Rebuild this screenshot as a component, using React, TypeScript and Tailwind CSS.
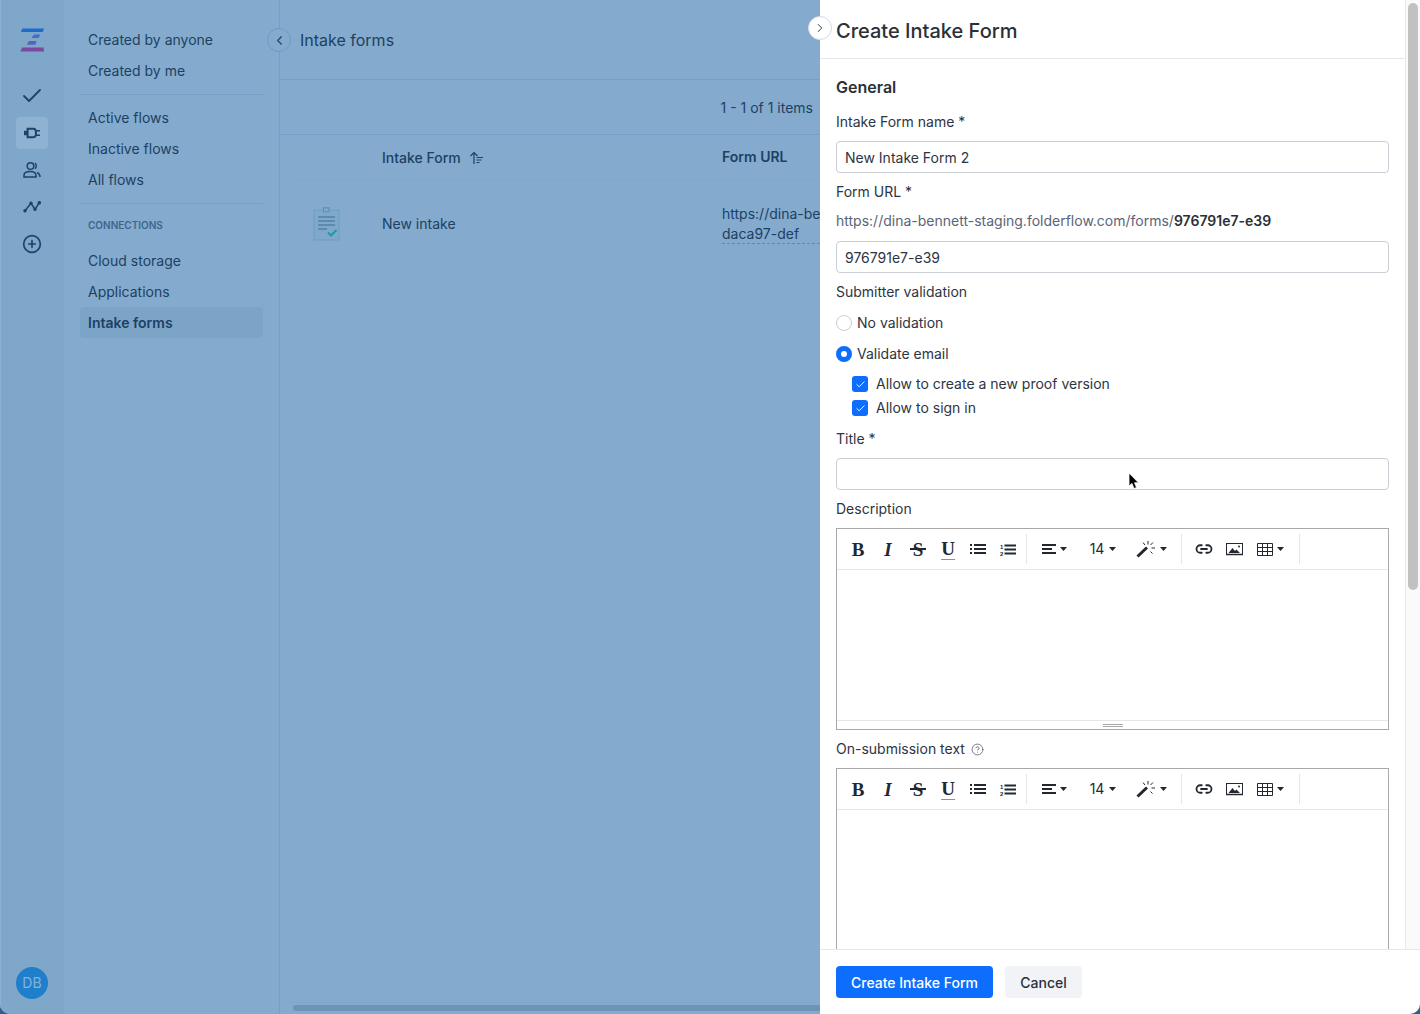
import { Check, ChevronLeft, ChevronRight, CircleHelp, CirclePlus, Link2 } from "lucide-react";

// Everything behind the drawer is painted in its dimmed colours, there is no scrim layer.
const TOP_VIEWS = ["Created by anyone", "Created by me"];
const FLOW_VIEWS = ["Active flows", "Inactive flows", "All flows"];
const CONNECTIONS = ["Cloud storage", "Applications"];

function Logo() {
  return (
    <svg width="24" height="24" viewBox="0 0 24 24">
      <path d="M2.4 0.5H24L22.8 4H0.8Z" fill="#1f6bd0" />
      <path d="M14 6.5H20.5L18.5 10H11.5Z" fill="#3f6fcf" />
      <path d="M9 13H16.5L15.5 16.8H6.8Z" fill="#5a62bf" />
      <path d="M2 19.5H23.5L24 23.5H0.5Z" fill="#7a4a9e" />
    </svg>
  );
}

function PlugIcon() {
  return (
    <svg width="18" height="18" viewBox="0 0 18 18" fill="none" stroke="#1c4368" strokeWidth="2">
      <path d="M4.6 4.8H10.5C12 4.8 13 6 13 9C13 12 12 13.2 10.5 13.2H4.6Z" />
      <path d="M1 6.8H4.5V11.2H1Z" fill="#1c4368" stroke="none" />
      <path d="M13 6.8H17M13 11.2H17" strokeWidth="1.6" />
    </svg>
  );
}

function PeopleIcon() {
  return (
    <svg width="18" height="18" viewBox="0 0 18 18" fill="none" stroke="#1c4368" strokeWidth="1.5">
      <circle cx="7.5" cy="5" r="3.3" />
      <path d="M1 16V14.5C1 12 3 10.6 7 10.6C11 10.6 13 12 13 14.5V16Z" />
      <path d="M12 2C13.6 3.2 13.6 6.4 12 7.8M17 16C17 14 16 12.4 14.2 11.4" />
    </svg>
  );
}

function TrendIcon() {
  return (
    <svg width="18" height="18" viewBox="0 0 18 18" fill="none" stroke="#1c4368" strokeWidth="1.5">
      <path d="M2 12.7L8 5.3L12 11.3L16.3 4.7" />
      <circle cx="2" cy="12.7" r="1" fill="#1c4368" />
      <circle cx="8" cy="5.3" r="1" fill="#1c4368" />
      <circle cx="12" cy="11.3" r="1" fill="#1c4368" />
      <circle cx="16.3" cy="4.7" r="1" fill="#1c4368" />
    </svg>
  );
}

function Rail() {
  return (
    <div className="flex w-16 shrink-0 flex-col items-center border-l border-[#8db1d1] bg-[#7fa7ca] pt-[28px] pr-px pb-[15px]">
      <Logo />
      <div className="mt-[28px] flex h-[32px] w-8 items-center justify-center">
        <Check size={24} strokeWidth={1.8} className="text-[#1c4368]" />
      </div>
      <div className="mt-[5px] flex h-8 w-8 items-center justify-center rounded-[4px] bg-[#8db2d2]">
        <PlugIcon />
      </div>
      <div className="mt-[5px] flex h-8 w-8 items-center justify-center">
        <PeopleIcon />
      </div>
      <div className="mt-[5px] flex h-8 w-8 items-center justify-center">
        <TrendIcon />
      </div>
      <div className="mt-[5px] flex h-8 w-8 items-center justify-center">
        <CirclePlus size={20} strokeWidth={2} className="text-[#1c4368]" />
      </div>
      <div className="mt-auto flex h-8 w-8 items-center justify-center rounded-full bg-[#1f7fcb] text-sm text-[#84b4dc]">
        DB
      </div>
    </div>
  );
}

function SideItem({ label, active }: { label: string; active?: boolean }) {
  return (
    <div
      className={
        active
          ? "flex h-[31px] items-center rounded-[4px] bg-[#7ca4c7] px-2 text-sm font-semibold text-[#1c4163]"
          : "flex h-[31px] items-center px-2 text-sm text-[#1c4163]"
      }
    >
      {label}
    </div>
  );
}

function Sidebar() {
  return (
    <div className="relative w-[216px] shrink-0 border-r border-[#72a0c6] pt-[24px] pr-4 pl-4">
      {TOP_VIEWS.map((v) => (
        <SideItem key={v} label={v} />
      ))}
      <div className="mt-2 mb-[7px] h-px bg-[#74a0c5]" />
      {FLOW_VIEWS.map((v) => (
        <SideItem key={v} label={v} />
      ))}
      <div className="mt-2 h-px bg-[#74a0c5]" />
      <div className="mt-[11px] mb-[10px] flex h-5 items-center px-2 text-[10px] font-semibold text-[#3d668f]">
        CONNECTIONS
      </div>
      {CONNECTIONS.map((v) => (
        <SideItem key={v} label={v} />
      ))}
      <SideItem label="Intake forms" active />
      <div className="absolute top-[28px] -right-3 flex h-6 w-6 items-center justify-center rounded-full border border-[#6c9bc3] bg-[#84abcd]">
        <ChevronLeft size={15} strokeWidth={1.8} className="text-[#1c4368]" />
      </div>
    </div>
  );
}

function SortIcon() {
  return (
    <svg width="16" height="14" viewBox="0 0 16 14" fill="none" stroke="#1c4368" strokeWidth="1.2">
      <path d="M5 13V1.5M1.5 5L5 1.5L8.5 5" />
      <path d="M7.5 6.5H14M7.5 9H12.5M7.5 11.5H10.5" />
    </svg>
  );
}

function FormIcon() {
  return (
    <svg width="28" height="34" viewBox="0 0 28 34" fill="none">
      <rect x="1" y="3" width="25" height="30" fill="#7fa8cb" stroke="#6f9cc1" />
      <rect x="10.5" y="0.8" width="5.5" height="4" fill="#7fa8cb" stroke="#5e8cb2" />
      <path d="M5 10H22M5 14H22M5 18H22M5 22H14" stroke="#3f6d94" />
      <path d="M15 25.5L18 28.5L23.5 23" stroke="#1c9ba3" strokeWidth="2" />
    </svg>
  );
}

function MainPane() {
  return (
    <div className="min-w-0 flex-1 overflow-hidden">
      <div className="flex h-20 items-center border-b border-[#72a0c6] pl-5 text-base text-[#1c4163]">Intake forms</div>
      <div className="flex h-[55px] items-center justify-end border-b border-[#72a0c6] pt-[2px] pr-[7px] text-sm text-[#1c4163]">
        1 - 1 of 1 items
      </div>
      <div className="ml-[15px] flex h-[45px] items-center border-b border-[#7fa8cb] pl-[87px] text-sm text-[#1c4163]">
        <div className="mt-[2px] flex w-[340px] items-center gap-2 font-medium">
          Intake Form
          <SortIcon />
        </div>
        <div className="font-semibold">Form URL</div>
      </div>
      <div className="flex h-[88px] items-center pl-[33px] text-sm text-[#1c4163]">
        <FormIcon />
        <div className="ml-[41px] w-[340px]">New intake</div>
        <div className="w-[98px] overflow-hidden leading-5 whitespace-nowrap">
          <div>https://dina-be</div>
          <div className="h-5 border-b border-dashed border-[#5f8bb0]">daca97-def</div>
        </div>
      </div>
    </div>
  );
}

function Caret() {
  return (
    <svg width="7" height="4" viewBox="0 0 7 4" className="shrink-0">
      <path d="M0 0H7L3.5 4Z" fill="#232830" />
    </svg>
  );
}

function Wand() {
  return (
    <svg width="20" height="18" viewBox="0 0 20 18" fill="none" stroke="#232830">
      <path d="M1.5 16.5L11 7.5" strokeWidth="3" />
      <path d="M12 1V4.5M17 2.5L14.5 5M7 2.5L9 5M15.5 8H19M14.5 11.5L16.5 13.5" strokeWidth="1" />
    </svg>
  );
}

function Bars() {
  return (
    <svg width="14" height="12" viewBox="0 0 14 12" fill="#232830">
      <rect x="0" y="1" width="14" height="2" />
      <rect x="0" y="5" width="10" height="2" />
      <rect x="0" y="9" width="14" height="2" />
    </svg>
  );
}

function BulletList() {
  return (
    <svg width="16" height="12" viewBox="0 0 16 12" fill="#232830">
      <rect x="0" y="1" width="2" height="2" />
      <rect x="0" y="5" width="2" height="2" />
      <rect x="0" y="9" width="2" height="2" />
      <rect x="4" y="1" width="12" height="2" />
      <rect x="4" y="5" width="12" height="2" />
      <rect x="4" y="9" width="12" height="2" />
    </svg>
  );
}

function NumberList() {
  return (
    <svg width="16" height="13" viewBox="0 0 16 13" fill="#232830">
      <text x="0" y="5.5" fontSize="6" fontWeight="700" fontFamily="Liberation Sans">1</text>
      <text x="0" y="12.5" fontSize="6" fontWeight="700" fontFamily="Liberation Sans">2</text>
      <rect x="4.5" y="1.5" width="11.5" height="2" />
      <rect x="4.5" y="5.5" width="11.5" height="2" />
      <rect x="4.5" y="9.5" width="11.5" height="2" />
    </svg>
  );
}

function ImageIcon() {
  return (
    <svg width="17" height="14" viewBox="0 0 17 14" fill="none">
      <rect x="0.5" y="1.5" width="16" height="11" stroke="#232830" />
      <path d="M2.5 11L6.5 6L9 9L10.5 7.5L14 11Z" fill="#232830" />
      <circle cx="13" cy="4.5" r="1" fill="#232830" />
      <path d="M0 12.5H17" stroke="#232830" strokeWidth="1.5" />
    </svg>
  );
}

function TableIcon() {
  return (
    <svg width="16" height="13" viewBox="0 0 16 13" fill="none" stroke="#232830">
      <path d="M0.5 0.5H15.5V12.5H0.5ZM0.5 4.5H15.5M0.5 8.5H15.5M5.5 0.5V12.5M10.5 0.5V12.5" />
    </svg>
  );
}

function Sep({ className }: { className: string }) {
  return <div className={`h-[30px] w-px bg-[#e4e6ea] ${className}`} />;
}

function Toolbar() {
  const btn = "flex h-[30px] w-[30px] items-center justify-center text-[#232830]";
  const drop = "flex h-[30px] items-center justify-center gap-[4px] text-[#232830]";
  const serif = "font-['Liberation_Serif',serif] text-[19px] leading-none font-bold";
  return (
    <div className="flex h-[41px] items-center border-b border-[#e4e6ea] pl-[6px]">
      <div className={btn}>
        <span className={serif}>B</span>
      </div>
      <div className={btn}>
        <span className={`${serif} italic`}>I</span>
      </div>
      <div className={btn}>
        <span className={`${serif} relative`}>
          S
          <span className="absolute top-[8px] -right-[3px] -left-[3px] h-[2px] bg-[#232830]" />
        </span>
      </div>
      <div className={btn}>
        <span className={`${serif} relative pb-[2px]`}>
          U
          <span className="absolute right-0 bottom-0 left-0 h-px bg-[#8a8f99]" />
        </span>
      </div>
      <div className={btn}>
        <BulletList />
      </div>
      <div className={btn}>
        <NumberList />
      </div>
      <Sep className="ml-[3px]" />
      <div className={`${drop} w-[55px]`}>
        <Bars />
        <Caret />
      </div>
      <div className={`${drop} w-[42px] gap-[5px] text-sm`}>
        14
        <Caret />
      </div>
      <div className={`${drop} w-[54px] gap-0`}>
        <Wand />
        <Caret />
      </div>
      <Sep className="ml-[3px]" />
      <div className={`${btn} ml-[7px]`}>
        <Link2 size={18} strokeWidth={2.4} />
      </div>
      <div className={btn}>
        <ImageIcon />
      </div>
      <div className={`${drop} w-[42px]`}>
        <TableIcon />
        <Caret />
      </div>
      <Sep className="ml-2" />
    </div>
  );
}

function Editor() {
  return (
    <div className="shrink-0 border border-[#a9a9a9]">
      <Toolbar />
      <div className="h-[150px]" />
      <div className="flex h-[9px] flex-col items-center justify-center gap-px border-t border-[#e4e6ea]">
        <div className="h-px w-5 bg-[#a9a9a9]" />
        <div className="h-px w-5 bg-[#a9a9a9]" />
      </div>
    </div>
  );
}

function Label({ children, className }: { children: React.ReactNode; className?: string }) {
  return <div className={`flex h-5 items-center text-sm text-[#2e3542] ${className ?? ""}`}>{children}</div>;
}

function TextInput({ value }: { value?: string }) {
  return (
    <div className="flex h-8 items-center rounded-[4px] border border-[#ccced6] bg-white px-2 pt-px text-sm text-[#2e3542]">
      {value}
    </div>
  );
}

function CheckRow({ label }: { label: string }) {
  return (
    <div className="flex h-5 items-center gap-2 pl-4 text-sm text-[#2e3542]">
      <div className="flex h-4 w-4 items-center justify-center rounded-[3px] bg-[#0d6efd]">
        <Check size={11} strokeWidth={2} className="text-white" />
      </div>
      {label}
    </div>
  );
}

function Drawer() {
  return (
    <div className="relative flex w-[600px] shrink-0 flex-col rounded-br-[10px] bg-white">
      <div className="absolute top-[16px] -left-3 flex h-6 w-6 items-center justify-center rounded-full border border-[#d6dae2] bg-white">
        <ChevronRight size={14} strokeWidth={1.7} className="text-[#2e3542]" />
      </div>
      <div className="flex min-h-0 flex-1">
        <div className="min-w-0 flex-1 overflow-hidden">
          <div className="flex h-[59px] items-center border-b border-[#e6e7ec] px-4 pt-[3px] text-xl font-medium text-[#2a3038]">
            Create Intake Form
          </div>
          <div className="flex flex-col gap-[9px] px-4 pt-4">
            <div className="mb-1 flex h-6 items-center text-base font-semibold text-[#2a3038]">General</div>
            <Label>Intake Form name *</Label>
            <TextInput value="New Intake Form 2" />
            <Label>Form URL *</Label>
            <div className="mb-px flex h-5 items-center text-sm text-[#5b6478]">
              https://dina-bennett-staging.folderflow.com/forms/
              <span className="font-semibold text-[#2a3038]">976791e7-e39</span>
            </div>
            <TextInput value="976791e7-e39" />
            <Label>Submitter validation</Label>
            <div className="mt-[2px] flex h-5 items-center gap-[5px] text-sm text-[#2e3542]">
              <div className="h-4 w-4 rounded-full border border-[#ccced6] bg-white" />
              No validation
            </div>
            <div className="mt-[2px] flex h-5 items-center gap-[5px] text-sm text-[#2e3542]">
              <div className="h-4 w-4 rounded-full border-[5px] border-[#0d6efd] bg-white" />
              Validate email
            </div>
            <div className="mt-px flex flex-col gap-1">
              <CheckRow label="Allow to create a new proof version" />
              <CheckRow label="Allow to sign in" />
            </div>
            <Label className="mt-[2px]">Title *</Label>
            <TextInput />
            <Label>Description</Label>
            <Editor />
            <Label>
              On-submission text
              <CircleHelp size={13} strokeWidth={1.6} className="ml-[6px] text-[#5f6779]" />
            </Label>
            <Editor />
          </div>
        </div>
        <div className="w-[15px] shrink-0 border-l border-[#e9e9e9] bg-[#fafafa] pt-[3px] pl-[2px]">
          <div className="h-[587px] w-[10px] rounded-full bg-[#c1c1c1]" />
        </div>
      </div>
      <div className="flex h-[65px] shrink-0 items-center gap-3 border-t border-[#e6e7ec] px-4 text-sm font-medium">
        <div className="flex h-8 w-[157px] items-center justify-center rounded-[4px] bg-[#0d6efd] pt-px text-white">
          Create Intake Form
        </div>
        <div className="flex h-8 w-[77px] items-center justify-center rounded-[4px] bg-[#f2f3f7] pt-px text-[#2a3038]">
          Cancel
        </div>
      </div>
      {/* mouse pointer caught in the screenshot */}
      <svg width="12" height="18" viewBox="0 0 12 18" className="absolute top-[472px] left-[308px]">
        <path d="M1 1V14L4 11.5L6 16.5L8.5 15.5L6.5 10.8H10.5Z" fill="#000" stroke="#fff" strokeWidth="0.8" />
      </svg>
    </div>
  );
}

export default function App() {
  return (
    <div className="h-[1014px] w-[1420px] overflow-hidden bg-white font-['Inter',sans-serif]">
      <div className="flex h-full bg-[#2f5f8c]">
        <div className="flex h-full w-[820px] shrink-0 flex-col overflow-hidden rounded-bl-[10px] bg-[#84abcd]">
          <div className="flex min-h-0 flex-1">
            <Rail />
            <Sidebar />
            <div className="flex min-w-0 flex-1 flex-col">
              <MainPane />
              <div className="mt-auto ml-[10px] h-[12px] border-t border-[#7fa8cb] pt-[2px] pl-[3px]">
                <div className="h-[6px] rounded-l-full bg-[#6b95b8]" />
              </div>
            </div>
          </div>
        </div>
        <Drawer />
      </div>
    </div>
  );
}
